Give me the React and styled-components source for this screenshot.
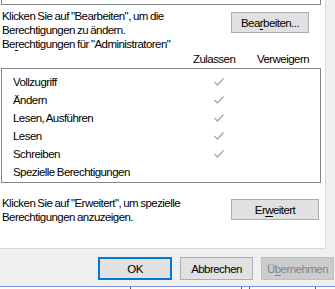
import React from 'react';
import styled, { createGlobalStyle } from 'styled-components';

const GlobalStyle = createGlobalStyle`
  html, body {
    margin: 0;
    padding: 0;
    background: #f0f0f0;
  }
  body {
    font-family: "Liberation Sans", Arial, sans-serif;
    font-size: 11.5px;
    letter-spacing: -0.55px;
    word-spacing: -0.5px;
    color: #000;
  }
`;

const Window = styled.div`
  width: 335px;
  height: 289px;
  display: flex;
  flex-direction: column;
  overflow: hidden;
`;

const Panel = styled.div`
  width: 325px;
  height: 249px;
  background: #fff;
  border-right: 1px solid #d9d9d9;
  border-bottom: 1px solid #d9d9d9;
  display: flex;
  flex-direction: column;
`;

const TopBox = styled.div`
  height: 4px;
  margin: 0 4px 0 1px;
  border: 1px solid #828790;
  border-top: none;
`;

const InfoRow = styled.div`
  display: flex;
  justify-content: space-between;
  align-items: flex-start;
  margin: ${(p) => p.$top}px ${(p) => p.$right ?? 16}px 0 2px;
`;

const Text = styled.div`
  line-height: 14px;
  white-space: nowrap;
`;

const Key = styled.span`
  text-decoration: underline;
  text-underline-offset: 2px;
`;

const Button = styled.button`
  box-sizing: border-box;
  width: ${(p) => p.$w}px;
  height: ${(p) => p.$h || 21}px;
  margin-top: ${(p) => p.$mt || 0}px;
  padding: 0;
  background: ${(p) => (p.$disabled ? '#cccccc' : '#e1e1e1')};
  border: ${(p) =>
    p.$default ? '2px solid #0078d7' : p.$disabled ? '1px solid #bfbfbf' : '1px solid #adadad'};
  color: ${(p) => (p.$disabled ? '#838383' : '#000')};
  font-family: inherit;
  font-size: inherit;
  letter-spacing: inherit;
  word-spacing: inherit;
  line-height: 14px;
`;

const HeaderRow = styled.div`
  display: flex;
  margin: 1px 0 0 0;
  padding-left: 193px;
  line-height: 14px;
`;

const HeaderCell = styled.span`
  width: ${(p) => p.$w}px;
`;

const ListBox = styled.div`
  box-sizing: border-box;
  height: 115px;
  margin: 2px 4px 0 1px;
  border: 1px solid #828790;
  padding: 4px 0 1px 11px;
`;

const Row = styled.div`
  display: grid;
  grid-template-columns: 200px 12px;
  align-items: center;
  height: 18px;
`;

const Footer = styled.div`
  display: flex;
  justify-content: flex-end;
  gap: 8px;
  padding: 8px 1px 0 0;
`;

const Strip = styled.div`
  display: flex;
  margin-top: 6px;
  height: 2px;
  border-top: 1px solid #7f95dd;
  background: #fff;
`;

const StripCell = styled.div`
  width: ${(p) => p.$w}px;
  border-right: 1px solid #555;
`;

const Check = () => (
  <svg width="12" height="10" viewBox="0 0 12 10">
    <polyline
      points="1.5,5 4.5,8 10.5,1.5"
      fill="none"
      stroke="#a6a6a6"
      strokeWidth="1.3"
    />
  </svg>
);

const permissions = [
  ['Vollzugriff', true],
  ['Ändern', true],
  ['Lesen, Ausführen', true],
  ['Lesen', true],
  ['Schreiben', true],
  ['Spezielle Berechtigungen', false],
];

export default function App() {
  return (
    <Window>
      <GlobalStyle />
      <Panel>
        <TopBox />
        <InfoRow $top={4}>
          <Text>
            Klicken Sie auf "Bearbeiten", um die
            <br />
            Berechtigungen zu ändern.
          </Text>
          <Button $w={78} $mt={3}>
            Bea<Key>r</Key>beiten...
          </Button>
        </InfoRow>
        <InfoRow $top={0}>
          <Text>
            Be<Key>r</Key>echtigungen für "Administratoren"
          </Text>
        </InfoRow>
        <HeaderRow>
          <HeaderCell $w={64}>Zulassen</HeaderCell>
          <HeaderCell $w={60}>Verweigern</HeaderCell>
        </HeaderRow>
        <ListBox>
          {permissions.map(([name, allowed]) => (
            <Row key={name}>
              <Text>{name}</Text>
              {allowed ? <Check /> : <span />}
            </Row>
          ))}
        </ListBox>
        <InfoRow $top={13} $right={6}>
          <Text>
            Klicken Sie auf "Erweitert", um spezielle
            <br />
            Berechtigungen anzuzeigen.
          </Text>
          <Button $w={88} $mt={3}>
            Er<Key>w</Key>eitert
          </Button>
        </InfoRow>
      </Panel>
      <Footer>
        <Button $w={74} $h={23} $default>
          OK
        </Button>
        <Button $w={73} $h={23}>
          Abbrechen
        </Button>
        <Button $w={73} $h={23} $disabled>
          Ü<Key>b</Key>ernehmen
        </Button>
      </Footer>
      <Strip>
        <StripCell $w={130} />
        <StripCell $w={110} />
        <StripCell $w={7} />
        <StripCell $w={65} />
      </Strip>
    </Window>
  );
}
